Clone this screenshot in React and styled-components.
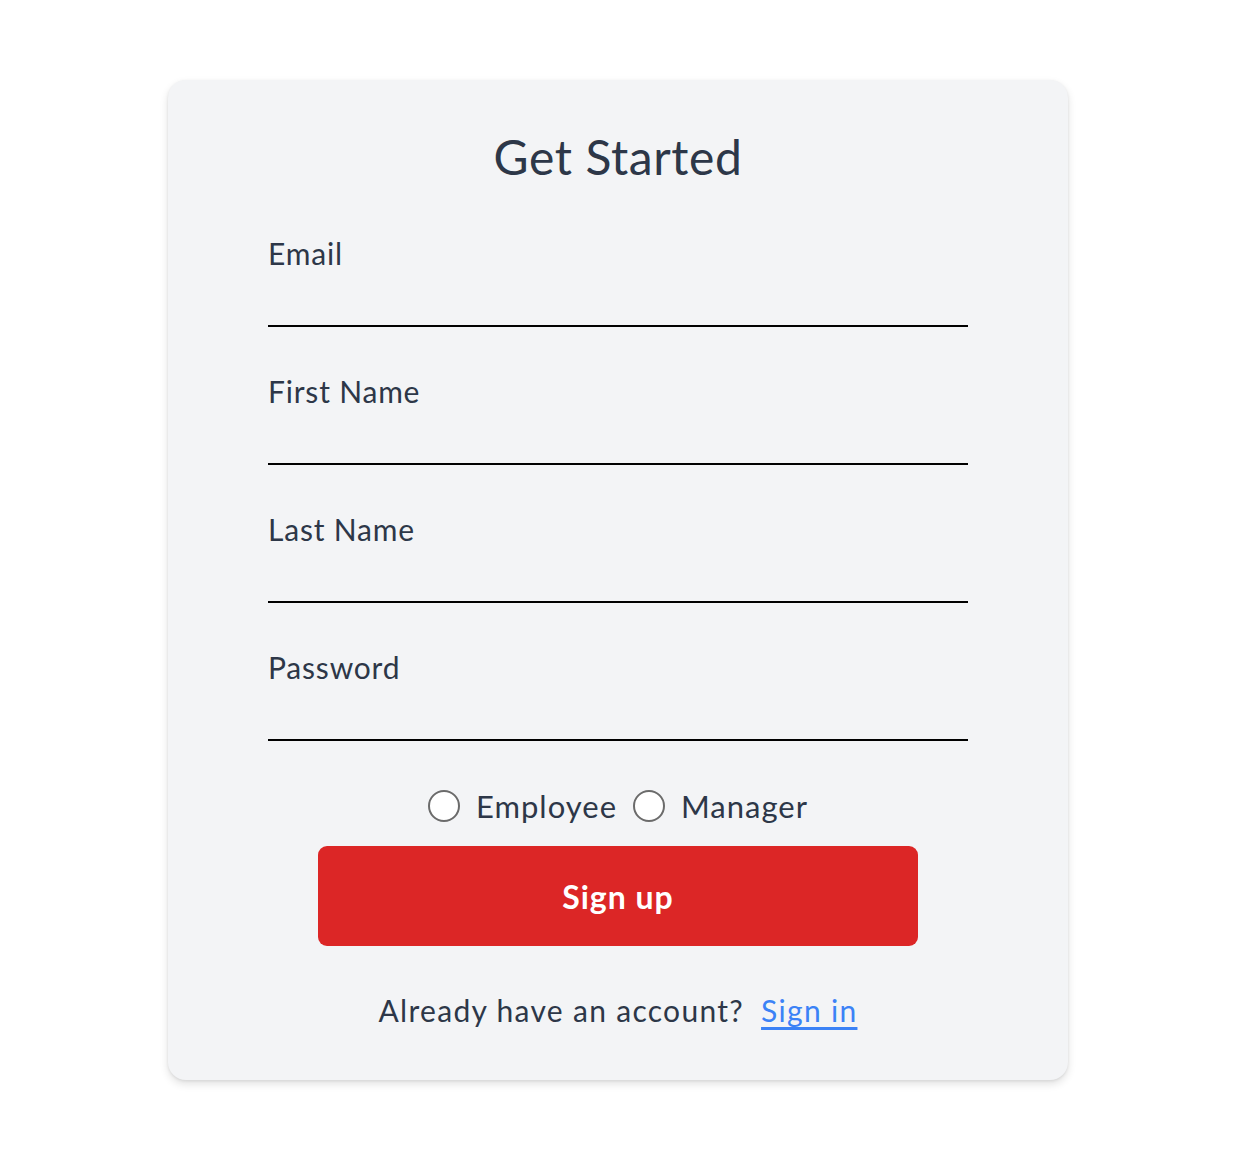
import React from "react";
import styled, { createGlobalStyle } from "styled-components";

const GlobalStyle = createGlobalStyle`
  body {
    margin: 0;
    background: #fff;
    font-family: Lato, "Noto Sans", sans-serif;
  }
`;

const Page = styled.div`
  display: flex;
  justify-content: center;
  padding: 80px 8px 96px 0;
`;

const Card = styled.form`
  box-sizing: border-box;
  width: 900px;
  height: 1000px;
  padding: 48px 100px 50px;
  background-color: #f3f4f6;
  border-radius: 18px;
  box-shadow: 0 4px 8px rgba(0, 0, 0, 0.12), 0 1px 3px rgba(0, 0, 0, 0.08);
  display: flex;
  flex-direction: column;
  align-items: center;
`;

const Title = styled.h1`
  margin: 0 0 47px;
  font-size: 48px;
  line-height: 58px;
  font-weight: 400;
  letter-spacing: 0.6px;
  color: #2d3748;
`;

const Field = styled.div`
  width: 100%;
  display: flex;
  flex-direction: column;
  margin-bottom: ${(p) => (p.last ? "45px" : "44px")};
`;

const Label = styled.label`
  font-size: 30px;
  line-height: 40px;
  letter-spacing: 0.8px;
  color: #2d3748;
`;

const Input = styled.input`
  box-sizing: border-box;
  height: 54px;
  width: 100%;
  border: none;
  border-bottom: 2px solid #000;
  background: transparent;
  outline: none;
  font-size: 26px;
  font-family: inherit;
`;

const RadioRow = styled.div`
  display: flex;
  align-items: center;
  height: 40px;
  gap: 16px;
  margin-bottom: 20px;
`;

const RadioOption = styled.label`
  display: flex;
  align-items: center;
  gap: 16px;
  font-size: 31px;
  letter-spacing: 1px;
  color: #2d3748;
`;

const Radio = styled.input`
  appearance: none;
  margin: 0;
  width: 32px;
  height: 32px;
  border: 2px solid #6b6b6b;
  border-radius: 50%;
  background: #fff;
`;

const Button = styled.button`
  width: 600px;
  height: 100px;
  border: none;
  border-radius: 9px;
  background-color: #dc2626;
  color: #fff;
  font-family: inherit;
  font-size: 32px;
  font-weight: 700;
  letter-spacing: 1px;
  margin-bottom: 44px;
  cursor: pointer;
`;

const Footer = styled.p`
  margin: 0;
  font-size: 30px;
  line-height: 40px;
  letter-spacing: 1.3px;
  color: #2d3748;
`;

const SignIn = styled.a`
  color: #3b82f6;
  text-decoration: underline;
  text-underline-offset: 5px;
  margin-left: 8px;
`;

const fields = [
  { id: "email", label: "Email", type: "email" },
  { id: "firstName", label: "First Name", type: "text" },
  { id: "lastName", label: "Last Name", type: "text" },
  { id: "password", label: "Password", type: "password" },
];

export default function App() {
  return (
    <>
      <GlobalStyle />
      <Page>
        <Card onSubmit={(e) => e.preventDefault()}>
          <Title>Get Started</Title>
          {fields.map((f, i) => (
            <Field key={f.id} last={i === fields.length - 1}>
              <Label htmlFor={f.id}>{f.label}</Label>
              <Input id={f.id} type={f.type} />
            </Field>
          ))}
          <RadioRow>
            <RadioOption>
              <Radio type="radio" name="role" value="employee" />
              Employee
            </RadioOption>
            <RadioOption>
              <Radio type="radio" name="role" value="manager" />
              Manager
            </RadioOption>
          </RadioRow>
          <Button type="submit">Sign up</Button>
          <Footer>
            Already have an account? <SignIn href="#">Sign in</SignIn>
          </Footer>
        </Card>
      </Page>
    </>
  );
}
